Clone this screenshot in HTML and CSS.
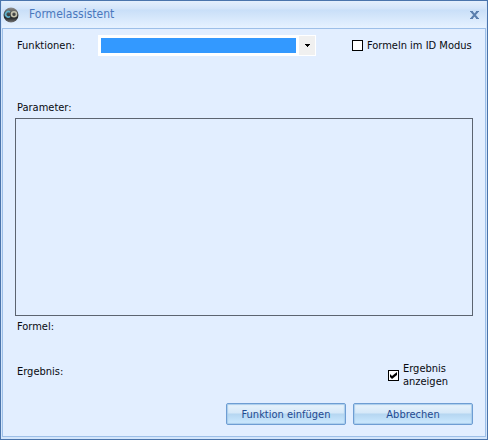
FILE: index.html
```html
<!DOCTYPE html>
<html lang="de">
<head>
<meta charset="utf-8">
<title>Formelassistent</title>
<link rel="stylesheet" href="styles.css">
</head>
<body>
<main class="window">
  <header class="titlebar">
    <svg class="logo" viewBox="0 0 16 16" aria-hidden="true">
      <defs>
        <linearGradient id="ball" x1="0" y1="0" x2="0" y2="1">
          <stop offset="0" stop-color="#92918f"/>
          <stop offset=".3" stop-color="#555655"/>
          <stop offset=".7" stop-color="#272a2c"/>
          <stop offset="1" stop-color="#777"/>
        </linearGradient>
      </defs>
      <circle cx="8" cy="8" r="7.5" fill="url(#ball)"/>
      <path d="M7 5.2A2.7 2.7 0 1 0 7 9.4" fill="none" stroke="#5fb2cc" stroke-width="1.7"/>
      <circle cx="11" cy="7.3" r="2.5" fill="none" stroke="#c4c2ae" stroke-width="1.6"/>
    </svg>
    <h1 class="title">Formelassistent</h1>
    <button class="close" type="button" aria-label="Schließen">
      <svg viewBox="0 0 9 8" aria-hidden="true">
        <path d="M0 .5h3M6 .5h3M0 7.5h3M6 7.5h3" stroke="#5b7fae" fill="none"/>
        <path d="M1.5 .5L7.5 7.5M7.5 .5L1.5 7.5" stroke="#5b7fae" stroke-width="2" fill="none"/>
      </svg>
    </button>
  </header>
  <form class="panel">
    <div class="row">
      <label class="name" for="func">Funktionen:</label>
      <div class="combo">
        <select id="func" class="combo-field"><option></option></select>
        <span class="combo-button"><svg viewBox="0 0 5 3" aria-hidden="true"><path d="M0 0h5v1H4v1H3v1H2V2H1V1H0z"/></svg></span>
      </div>
      <label class="check id-mode"><span class="box"><input type="checkbox"></span><span class="wrap">Formeln im ID Modus</span></label>
    </div>
    <h2 class="caption" id="parameter">Parameter:</h2>
    <section class="parameters" aria-labelledby="parameter"></section>
    <p class="formula">Formel:</p>
    <div class="row result">
      <span class="result-name">Ergebnis:</span>
      <label class="check show-result"><span class="box"><input type="checkbox" checked><svg viewBox="0 0 7 7" aria-hidden="true"><path d="M0 2l2 2 5-4v3L2 7 0 5z"/></svg></span><span class="wrap">Ergebnis anzeigen</span></label>
    </div>
    <div class="actions">
      <button class="action" type="button">Funktion einfügen</button>
      <button class="action" type="button">Abbrechen</button>
    </div>
  </form>
</main>
</body>
</html>
```
FILE: styles.css
```css
* {
  box-sizing: border-box;
}

body {
  margin: 0;
  font: 11px/13px "DejaVu Sans Condensed", "DejaVu Sans", sans-serif;
  color: #080a10;
}

.window {
  display: flex;
  flex-direction: column;
  min-height: 100vh;
  padding: 0 1px 2px;
  border: 1px solid #4a74ac;
  background: #d3e5fb;
}

.titlebar {
  display: flex;
  align-items: center;
  height: 27px;
  padding: 0 7px 0 1px;
  background: linear-gradient(#e4effd 0, #d2e4fa 8px, #c9dff8 9px, #e5f1ff 26px);
}

.logo {
  width: 16px;
  height: 16px;
}

.title {
  flex: 1;
  margin: 0 0 0 10px;
  font-size: 12px;
  line-height: 15px;
  font-weight: normal;
  color: #4a78bd;
}

.close {
  display: flex;
  padding: 0;
  border: 0;
  background: none;
}

.close svg {
  width: 9px;
  height: 8px;
}

.panel {
  display: flex;
  flex: 1;
  flex-direction: column;
  padding: 6px 12px 11px;
  border: 1px solid #9dbfe8;
  background: #e2eeff;
}

.row {
  display: flex;
  align-items: center;
  padding-left: 2px;
}

.name {
  width: 81px;
}

.combo {
  position: relative;
  width: 218px;
  height: 21px;
}

.combo-field {
  width: 100%;
  height: 100%;
  padding: 0;
  border: 3px solid #fff;
  border-right-width: 20px;
  border-radius: 0;
  background: #3399ff;
  appearance: none;
}

.combo-button {
  position: absolute;
  top: 1px;
  right: 1px;
  display: flex;
  align-items: center;
  justify-content: center;
  width: 16px;
  height: 19px;
  background: #f0f0f0;
  pointer-events: none;
}

.combo-button svg {
  width: 5px;
  height: 3px;
}

.check {
  display: flex;
  align-items: center;
  gap: 4px;
  margin-left: auto;
}

.id-mode {
  width: 121px;
}

.id-mode .wrap {
  white-space: nowrap;
}

.box {
  position: relative;
  display: flex;
  width: 11px;
  height: 11px;
}

.box input {
  width: 11px;
  height: 11px;
  margin: 0;
  border: 1px solid #000;
  background: #fff;
  appearance: none;
}

.box svg {
  position: absolute;
  top: 2px;
  left: 2px;
  width: 7px;
  height: 7px;
  pointer-events: none;
}

.box input:not(:checked) + svg {
  display: none;
}

.caption {
  margin: 45px 0 4px 2px;
  font: inherit;
}

.parameters {
  flex: 1;
  border: 1px solid #5c6470;
}

.formula {
  margin: 4px 0 29px 2px;
}

.result {
  align-items: flex-start;
}

.result-name {
  padding-top: 3px;
}

.show-result {
  width: 85px;
}

.wrap {
  flex: 1;
}

.actions {
  display: flex;
  justify-content: flex-end;
  gap: 7px;
  margin-top: 15px;
}

.action {
  width: 120px;
  height: 22px;
  padding: 0;
  border: 1px solid #6e9dd3;
  border-radius: 2px;
  background: linear-gradient(#e9f3fc 0, #d5e8f8 9px, #b5d6f1 10px, #cdeaff 20px);
  box-shadow: inset 0 0 1px 1px #a9cdec;
  font: inherit;
  color: #1f4a91;
}
```
